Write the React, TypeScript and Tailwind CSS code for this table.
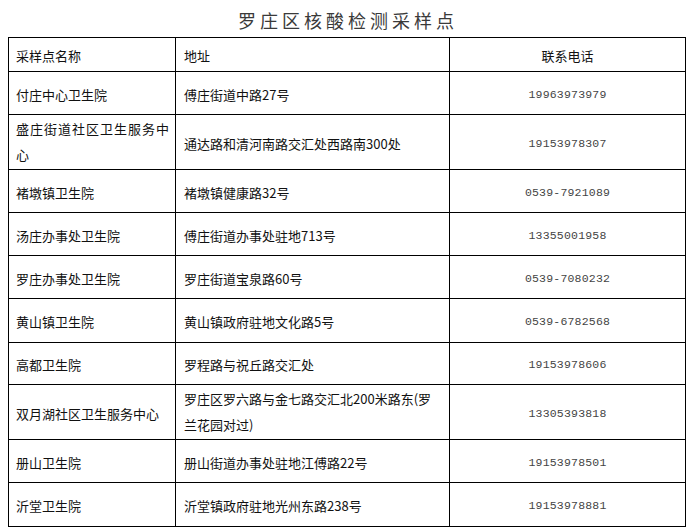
import React from 'react';

const rows = [
    { name: ['付庄中心卫生院'], addr: ['傅庄街道中路27号'], phone: '19963973979', h: 'h-[43px]' },
    { name: ['盛庄街道社区卫生服务中', '心'], addr: ['通达路和清河南路交汇处西路南300处'], phone: '19153978307', h: 'h-[55px]' },
    { name: ['褚墩镇卫生院'], addr: ['褚墩镇健康路32号'], phone: '0539-7921089', h: 'h-[43px]' },
    { name: ['汤庄办事处卫生院'], addr: ['傅庄街道办事处驻地713号'], phone: '13355001958', h: 'h-[43px]' },
    { name: ['罗庄办事处卫生院'], addr: ['罗庄街道宝泉路60号'], phone: '0539-7080232', h: 'h-[43px]' },
    { name: ['黄山镇卫生院'], addr: ['黄山镇政府驻地文化路5号'], phone: '0539-6782568', h: 'h-[44px]' },
    { name: ['高都卫生院'], addr: ['罗程路与祝丘路交汇处'], phone: '19153978606', h: 'h-[42px]' },
    { name: ['双月湖社区卫生服务中心'], addr: ['罗庄区罗六路与金七路交汇北200米路东(罗', '兰花园对过)'], phone: '13305393818', h: 'h-[55px]' },
    { name: ['册山卫生院'], addr: ['册山街道办事处驻地江傅路22号'], phone: '19153978501', h: 'h-[43px]' },
    { name: ['沂堂卫生院'], addr: ['沂堂镇政府驻地光州东路238号'], phone: '19153978881', h: 'h-[44px]' },
];

function Lines({ lines, wide }: { lines: string[]; wide?: boolean }) {
    return (
        <div className={lines.length > 1 ? 'leading-[26px]' : 'leading-[20px] pt-[3px]'}>
            {lines.map((l, i) => (
                <div key={i} className={wide && lines.length > 1 && i === 0 ? 'tracking-[1px]' : ''}>
                    {l}
                </div>
            ))}
        </div>
    );
}

export default function App() {
    return (
        <div className="w-[690px] h-[530px] bg-white text-[#111] font-['Noto_Sans_CJK_SC',sans-serif] overflow-hidden">
            <div className="h-[37px] flex items-center justify-center pl-[6px]">
                <h1 className="text-[18px] tracking-[4px] text-[#3a3a3a] leading-none pt-[2px] font-['Noto_Sans_CJK_SC',serif]">
                    罗庄区核酸检测采样点
                </h1>
            </div>

            <table className="ml-[8px] w-[677px] table-fixed border-collapse text-[13px] leading-[20px]">
                <colgroup>
                    <col className="w-[167px]" />
                    <col className="w-[274px]" />
                    <col className="w-[236px]" />
                </colgroup>
                <thead>
                    <tr className="h-[34px]">
                        <th className="border border-black font-normal text-left pl-[7px] pt-[3px]">采样点名称</th>
                        <th className="border border-black font-normal text-left pl-[8px] pt-[3px]">地址</th>
                        <th className="border border-black font-normal text-center pt-[3px]">联系电话</th>
                    </tr>
                </thead>
                <tbody>
                    {rows.map((r, i) => (
                        <tr key={i} className={r.h}>
                            <td className="border border-black pl-[7px] p-0 align-middle">
                                <Lines lines={r.name} wide />
                            </td>
                            <td className="border border-black pl-[8px] p-0 align-middle">
                                <Lines lines={r.addr} />
                            </td>
                            <td className="border border-black text-center pt-[3px] align-middle font-['Liberation_Mono',monospace] text-[11.5px] tracking-[0.2px] text-[#444]">
                                {r.phone}
                            </td>
                        </tr>
                    ))}
                </tbody>
            </table>
        </div>
    );
}
